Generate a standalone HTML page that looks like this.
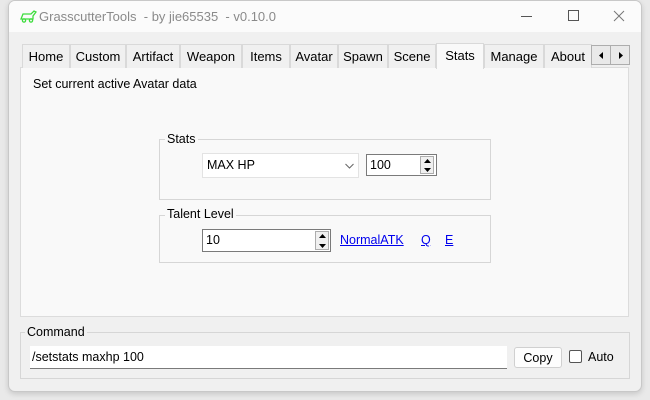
<!DOCTYPE html>
<html><head><meta charset="utf-8"><style>
*{box-sizing:border-box;margin:0;padding:0}
body{width:650px;height:400px;background:#e9e9e9;position:relative;overflow:hidden;font-family:"Liberation Sans",sans-serif;font-size:12.5px;color:#000}
.a{position:absolute}
.win{left:8px;top:0;width:634px;height:392px;background:#f0f0f0;border:1px solid #c8c8c8;border-radius:7px;overflow:hidden;box-shadow:0 2px 6px rgba(0,0,0,.15)}
.title{left:0;top:0;width:634px;height:31px;background:#fbfbfb}
.tab{top:44px;height:24px;border:1px solid #d9d9d9;border-bottom:none;background:#f0f0f0;text-align:center;line-height:24px;font-size:13px}
.sel{top:43px;height:26px;background:#f9f9f9;z-index:2;line-height:24px}
.panel{left:20px;top:67px;width:609px;height:250px;background:#f9f9f9;border:1px solid #dcdcdc}
.grp{border:1px solid #d6d6d6}
.lg{background:#f9f9f9;padding:0 2px;font-size:12.5px}
.box{background:#fff;border:1px solid #7a7a7a;font-size:12.5px;line-height:20px;padding-left:3px}
.spin{width:14px;border:1px solid #adadad;background:#f0f0f0}
a{color:#0000ee;text-decoration:underline;font-size:12.5px}
</style></head><body>
<div class="a win">
 <div class="a title">
  <svg class="a" style="left:10px;top:8px" width="20" height="14" viewBox="0 0 20 14"><g fill="none" stroke="#3ddc3d" stroke-width="1.3"><path d="M2 10 L4 5 L12 5 L15 2 L17 3 L14 7 L14 10 Z"/><circle cx="5" cy="11.5" r="1.6"/><circle cx="12" cy="11.5" r="1.6"/></g></svg>
  <div class="a" style="left:30px;top:8px;color:#8a8a8a;font-size:13px">GrasscutterTools&nbsp; - by jie65535&nbsp; - v0.10.0</div>
  <div class="a" style="left:512px;top:15px;width:11px;height:1px;background:#555"></div>
  <div class="a" style="left:559px;top:9px;width:11px;height:11px;border:1px solid #555"></div>
  <svg class="a" style="left:604px;top:9px" width="12" height="12" viewBox="0 0 12 12"><path d="M1 1L11 11M11 1L1 11" stroke="#777" stroke-width="1"/></svg>
 </div>
</div>
<div class="a panel"></div>
<div class="a tab" style="left:22px;width:48px">Home</div>
<div class="a tab" style="left:70px;width:56px">Custom</div>
<div class="a tab" style="left:126px;width:54px">Artifact</div>
<div class="a tab" style="left:180px;width:62px">Weapon</div>
<div class="a tab" style="left:242px;width:48px">Items</div>
<div class="a tab" style="left:290px;width:48px">Avatar</div>
<div class="a tab" style="left:338px;width:50px">Spawn</div>
<div class="a tab" style="left:388px;width:48px">Scene</div>
<div class="a tab sel" style="left:436px;width:48px">Stats</div>
<div class="a tab" style="left:484px;width:60px">Manage</div>
<div class="a tab" style="left:544px;width:48px">About</div>
<div class="a" style="left:591px;top:45px;width:20px;height:20px;border:1px solid #adadad;background:#e9e9e9"><svg class="a" style="left:7px;top:6px" width="5" height="7"><path d="M4 0V7L0 3.5Z" fill="#000"/></svg></div>
<div class="a" style="left:610px;top:45px;width:20px;height:20px;border:1px solid #adadad;background:#e9e9e9"><svg class="a" style="left:8px;top:6px" width="5" height="7"><path d="M0 0V7L4 3.5Z" fill="#000"/></svg></div>
<div class="a" style="left:33px;top:77px">Set current active Avatar data</div>

<div class="a grp" style="left:159px;top:139px;width:332px;height:61px"></div>
<div class="a lg" style="left:165px;top:132px">Stats</div>
<div class="a" style="left:202px;top:153px;width:157px;height:25px;background:#fff;border:1px solid #e3e3e3;line-height:23px;padding-left:4px">MAX HP<svg class="a" style="left:142px;top:9px" width="9" height="6"><path d="M0.5 1L4.5 5L8.5 1" fill="none" stroke="#666"/></svg></div>
<div class="a box" style="left:366px;top:154px;width:71px;height:22px">100</div>
<div class="a spin" style="left:420px;top:156px;height:18px"><svg class="a" style="left:3px;top:2px" width="7" height="13"><path d="M0 4L3.5 0L7 4Z M0 9L3.5 13L7 9Z" fill="#000"/></svg></div>

<div class="a grp" style="left:159px;top:215px;width:332px;height:48px"></div>
<div class="a lg" style="left:165px;top:207px">Talent Level</div>
<div class="a box" style="left:202px;top:229px;width:129px;height:23px">10</div>
<div class="a spin" style="left:315px;top:231px;height:19px"><svg class="a" style="left:3px;top:2px" width="7" height="14"><path d="M0 4L3.5 0L7 4Z M0 10L3.5 14L7 10Z" fill="#000"/></svg></div>
<a class="a" style="left:340px;top:233px">NormalATK</a>
<a class="a" style="left:421px;top:233px">Q</a>
<a class="a" style="left:445px;top:233px">E</a>

<div class="a grp" style="left:20px;top:332px;width:610px;height:47px"></div>
<div class="a" style="left:25px;top:325px;background:#f0f0f0;padding:0 2px">Command</div>
<div class="a" style="left:30px;top:346px;width:477px;height:23px;background:#fff;border-bottom:1px solid #7a7a7a;line-height:22px;padding-left:2px">/setstats maxhp 100</div>
<div class="a" style="left:514px;top:347px;width:48px;height:21px;background:#fdfdfd;border:1px solid #d0d0d0;border-radius:3px;text-align:center;line-height:20px">Copy</div>
<div class="a" style="left:569px;top:350px;width:13px;height:13px;border:1px solid #555;border-radius:2px;background:#fff"></div>
<div class="a" style="left:588px;top:350px">Auto</div>
</body></html>
